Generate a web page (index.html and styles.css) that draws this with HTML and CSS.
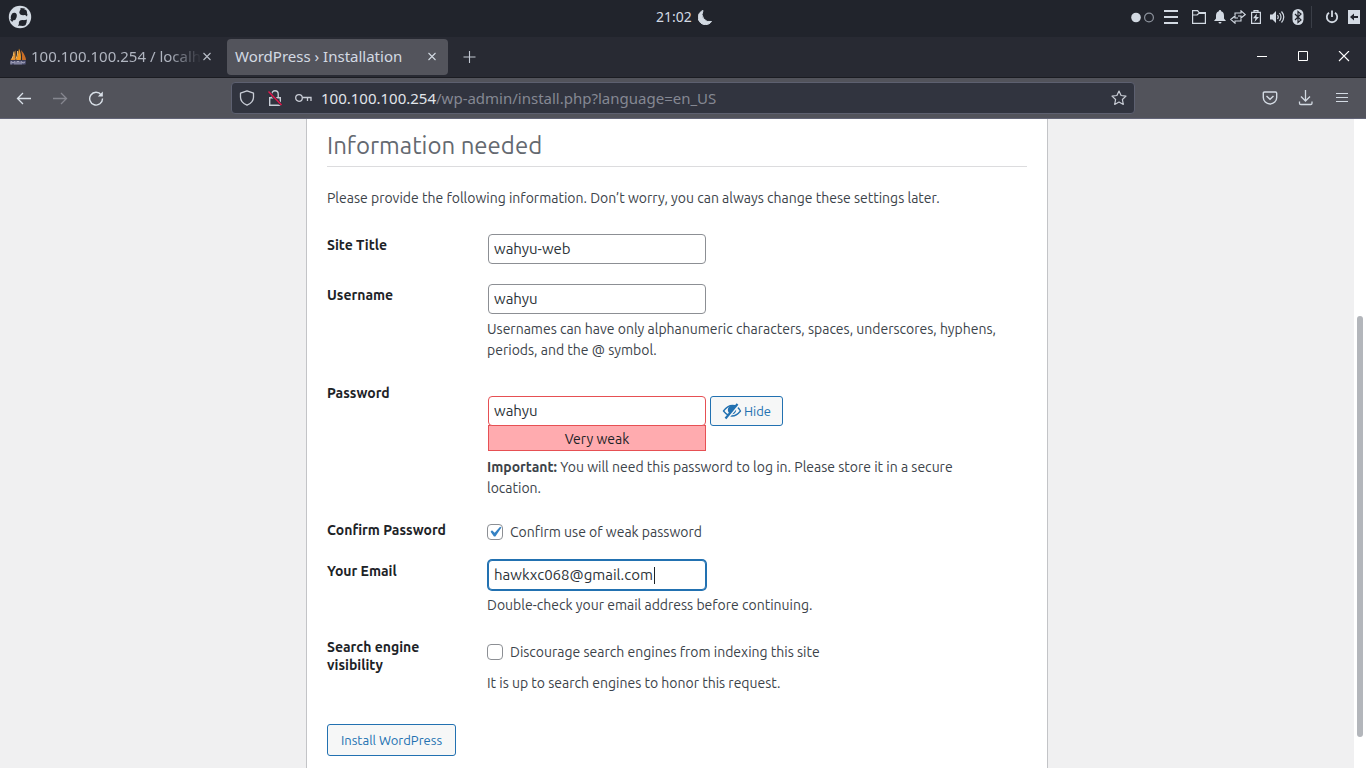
FILE: index.html
```html
<!DOCTYPE html>
<html lang="en">
<head>
<meta charset="utf-8">
<title>WordPress › Installation</title>
<link rel="stylesheet" href="styles.css">
</head>
<body>
<header class="panel">
  <button class="icon-btn launcher" aria-label="Applications"><svg width="24" height="24" viewBox="0 0 24 24"><circle cx="12" cy="12" r="11.200" fill="#d3dae3"/><g fill="#21242c"><ellipse cx="5.800" cy="11.500" rx="2.900" ry="3.800" transform="rotate(15 5.800 11.500)"/><path d="M1.800 14.500l4-.8-1.500 3.300z"/><ellipse cx="15.200" cy="7.200" rx="3.800" ry="3"/><path d="M12.500 3l4.500.5-1.500 2-3 1z"/><path d="M16.500 6l3 3-.5 2.500-2.500-2z"/><ellipse cx="14.500" cy="18" rx="3.700" ry="2.900"/><path d="M15.500 15.500l3.500-1-.6 3.500-1.500 1.500z"/><path d="M11.500 17.500l-1.500 3.500 3-.8z"/></g></svg></button>
  <div class="clock"><time>21:02</time><svg width="14" height="15" viewBox="0 0 14 15"><path d="M5 .5A7.300 7.300 0 1 0 13.500 11.500 7.600 7.600 0 0 1 5 .5z" fill="#d3dae3" stroke="#d3dae3"/></svg></div>
  <div class="tray">
    <svg class="dots" width="24" height="12" viewBox="0 0 24 12"><circle cx="6" cy="6.500" r="4.800" fill="#d3dae3"/><circle cx="19" cy="6.500" r="4.400" fill="none" stroke="#8d939d" stroke-width="1.200"/></svg>
    <svg class="menu" width="14" height="14" viewBox="0 0 14 14"><path d="M0 1h14M0 7h14M0 13h14" stroke="#d3dae3" stroke-width="2"/></svg>
    <svg class="folder" width="16" height="16" viewBox="0 0 16 16" fill="none" stroke="#d3dae3" stroke-width="1.200"><path d="M1.600 14.400V1.600h5l1.500 2h6.300v10.800zM1.600 6h4.500l1.500-1.500h6.800"/></svg>
    <svg class="bell" width="12" height="14" viewBox="0 0 12 14" fill="#d3dae3"><path d="M6 0a1.300 1.300 0 0 1 1.200 1.300C9.500 2 10 4 10 6v2.500l2 2.500H0l2-2.500V6c0-2 .5-4 2.800-4.700A1.300 1.300 0 0 1 6 0zM4.500 12h3a1.500 1.500 0 0 1-3 0z"/></svg>
    <svg class="sync" width="16" height="14" viewBox="0 0 16 14" fill="none" stroke="#d3dae3" stroke-width="1.100"><path d="M5 5V3h6V.8L15.300 4.500 11 8V6H8M11 9v2H5v2.200L.7 9.500 5 6v2h3"/></svg>
    <svg class="battery" width="10" height="14" viewBox="0 0 10 14"><path d="M.6 2.300h8.800v11.100H.6zM3 2V.7h4V2" fill="none" stroke="#d3dae3" stroke-width="1.200"/><path d="M5.800 3.500L2 8.300h2.500L3.500 12 8 7H5.500z" fill="#d3dae3"/></svg>
    <svg class="volume" width="16" height="14" viewBox="0 0 16 14"><path d="M1 4.500h2.500L7 1v12L3.500 9.500H1z" fill="#d3dae3"/><path d="M8.500 5q1.500 2 0 4M10.500 3q3 4 0 8M12.500 1.500q4.500 5.500 0 11" fill="none" stroke="#d3dae3" stroke-width="1.200"/></svg>
    <svg class="bluetooth" width="12" height="16" viewBox="0 0 12 16"><rect x=".5" width="11" height="16" rx="5.500" fill="#d3dae3"/><path d="M3 5l6 6-3 2.500v-11L9 5l-6 6" fill="none" stroke="#21242c" stroke-width="1.200"/></svg>
    <span class="divider"></span>
    <button class="icon-btn" aria-label="Power"><svg width="14" height="14" viewBox="0 0 14 14" fill="none" stroke="#d3dae3" stroke-width="1.800"><path d="M4 2.800a5.200 5.200 0 1 0 6 0M7 .5v6.500"/></svg></button>
    <button class="icon-btn session" aria-label="Session"><svg width="12" height="14" viewBox="0 0 12 14"><path d="M0 0h12v14H0z" fill="#d3dae3"/><path d="M2 7l4-3.500v2.500h4v2H6v2.500z" fill="#21242c"/></svg></button>
  </div>
</header>

<nav class="tabs" aria-label="Tabs">
  <div class="tab">
    <svg class="favicon" width="18" height="18" viewBox="0 0 18 18"><path d="M6.500 2v10H1.500Q5 8 6.500 2z" fill="#e8922c"/><path d="M10 .5q2.500 5 1.800 11.500H7Q9.500 7 10 .5z" fill="#f39a23"/><path d="M12 2q4.500 5 5 10h-4Q13.500 7 12 2z" fill="#c96e27"/><path d="M5 3.500Q4.500 8 3 11M8.500 3q.5 4-1.500 8" stroke="#f0bd6b" fill="none"/><path d="M1 12.500h16l-.5 4H1.500z" fill="#55577a"/><path d="M2 16.500v-3l2 1.500L6 13.500v3m2 0v-3h2v3m2 0v-3l2 1.500 2-1" stroke="#b2b3c6" fill="none" stroke-width=".9"/></svg>
    <span class="tab-title tab-title-fade">100.100.100.254 / localh</span>
    <button class="icon-btn" aria-label="Close tab"><svg width="10" height="10" viewBox="0 0 10 10"><path d="M1.500 1l7 7M8.500 1l-7 7" stroke="#b9bec8" stroke-width="1.100"/></svg></button>
  </div>
  <div class="tab tab-active">
    <span class="tab-title">WordPress › Installation</span>
    <button class="icon-btn" aria-label="Close tab"><svg width="10" height="10" viewBox="0 0 10 10"><path d="M1.500 1l7 7M8.500 1l-7 7" stroke="#d3dae3" stroke-width="1.100"/></svg></button>
  </div>
  <button class="icon-btn new-tab" aria-label="New tab"><svg width="13" height="13" viewBox="0 0 13 13"><path d="M6.500 0v12M.5 6h12" stroke="#c3c9d3" stroke-width="1.100"/></svg></button>
  <div class="window-controls">
    <button class="icon-btn" aria-label="Minimize"><svg width="12" height="12" viewBox="0 0 12 12"><path d="M1 5.500h10" stroke="#fff"/></svg></button>
    <button class="icon-btn" aria-label="Maximize"><svg width="12" height="12" viewBox="0 0 12 12"><path d="M1.500.5h9v9h-9z" fill="none" stroke="#fff"/></svg></button>
    <button class="icon-btn" aria-label="Close window"><svg width="12" height="12" viewBox="0 0 12 12"><path d="M1 0l10 10M11 0L1 10" stroke="#fff" stroke-width="1.100"/></svg></button>
  </div>
</nav>

<div class="toolbar">
  <div class="nav-buttons">
    <button class="icon-btn" aria-label="Back"><svg width="16" height="16" viewBox="0 0 16 16" fill="none" stroke="#d9e0e8" stroke-width="1.300"><path d="M15 8.500H1.500M7 3L1.500 8.500 7 14"/></svg></button>
    <button class="icon-btn" aria-label="Forward" disabled><svg width="16" height="16" viewBox="0 0 16 16" fill="none" stroke="#85868f" stroke-width="1.300"><path d="M1 8.500h13.500M9 3l5.500 5.500L9 14"/></svg></button>
    <button class="icon-btn" aria-label="Reload"><svg width="16" height="16" viewBox="0 0 16 16" fill="none" stroke="#d9e0e8" stroke-width="1.400"><path d="M13.200 4.800A6.400 6.400 0 1 0 14.500 8.600"/><path d="M14.800 1.600v5H9.800z" fill="#d9e0e8" stroke="none"/></svg></button>
  </div>
  <div class="address">
    <svg width="16" height="16" viewBox="0 0 16 16" fill="none" stroke="#c9cdd6" stroke-width="1.300"><path d="M8 .8l6.500 2.400v4q0 5-6.500 8-6.500-3-6.500-8v-4z" stroke-linejoin="round"/></svg>
    <svg width="16" height="16" viewBox="0 0 16 16" fill="none"><path d="M2.700 7.700h10.600v7.500H2.700zM4.800 7.500V4a3.200 3.200 0 0 1 6.400 0v3.500" stroke="#c9cdd6" stroke-width="1.400"/><path d="M1.500 1.500l13 13.500" stroke="#31343f" stroke-width="3"/><path d="M1.500 1.500l13 13.500" stroke="#e5164b" stroke-width="1.400"/></svg>
    <svg width="18" height="16" viewBox="0 0 18 16" fill="none" stroke="#c9cdd6" stroke-width="1.300"><circle cx="4" cy="8" r="3.300"/><path d="M7.300 7.500H16v3.500M12.500 7.500V11"/></svg>
    <p class="url">100.100.100.254<span class="url-path">/wp-admin/install.php?language=en_US</span></p>
    <button class="icon-btn" aria-label="Bookmark"><svg width="16" height="16" viewBox="0 0 16 16" fill="none" stroke="#c9cdd6" stroke-width="1.200"><path d="M8 1l2.100 4.500 4.900.6-3.600 3.400.9 4.900L8 12l-4.300 2.400.9-4.900L1 6.100l4.900-.6z" stroke-linejoin="round"/></svg></button>
  </div>
  <div class="tools">
    <button class="icon-btn" aria-label="Save to Pocket"><svg width="16" height="16" viewBox="0 0 16 16" fill="none" stroke="#d3dae3" stroke-width="1.400"><path d="M2.500 2h11q1.200 0 1.200 1.200v4.300a6.700 6.500 0 0 1-13.400 0V3.200Q1.300 2 2.500 2z"/><path d="M4.500 6L8 9.300 11.500 6"/></svg></button>
    <button class="icon-btn" aria-label="Downloads"><svg width="16" height="16" viewBox="0 0 16 16" fill="none" stroke="#d3dae3" stroke-width="1.300"><path d="M7.500 0v10.500M3 6.500L7.500 11 12 6.500M1.500 11.500v1.700q0 1.300 1.300 1.300h9.900q1.300 0 1.300-1.300v-1.700"/></svg></button>
    <button class="icon-btn" aria-label="Menu"><svg width="16" height="16" viewBox="0 0 16 16"><path d="M2 3.500h12M2 7.500h12M2 11.500h12" stroke="#d3dae3"/></svg></button>
  </div>
</div>

<div class="viewport">
  <main class="page">
    <form class="card" onsubmit="return false">
      <h1 class="heading">Information needed</h1>
      <p class="intro">Please provide the following information. Don’t worry, you can always change these settings later.</p>

      <div class="row">
        <label class="label" for="site-title">Site Title</label>
        <div class="field"><input class="input" id="site-title" type="text" value="wahyu-web"></div>
      </div>
      <div class="row">
        <label class="label" for="username">Username</label>
        <div class="field">
          <input class="input" id="username" type="text" value="wahyu">
          <p class="help">Usernames can have only alphanumeric characters, spaces, underscores, hyphens, periods, and the @ symbol.</p>
        </div>
      </div>
      <div class="row row-password">
        <label class="label" for="password">Password</label>
        <div class="field field-password">
          <div class="password-line">
            <input class="input input-weak" id="password" type="text" value="wahyu">
            <button class="button button-hide" type="button"><svg width="20" height="18" viewBox="0 0 20 18"><path d="M1.500 9Q5.500 3.500 10.500 3.500T18.500 9Q14.500 14 10 14T1.500 9z" fill="none" stroke="#2271b1" stroke-width="1.300"/><circle cx="10" cy="8" r="4.200" fill="#2271b1"/><path d="M5 17L17.500 2" stroke="#f6f7f7" stroke-width="2"/><path d="M3.500 16.500L15.500 2" stroke="#2271b1" stroke-width="2.200"/></svg>Hide</button>
          </div>
          <div class="strength" role="status">Very weak</div>
          <p class="help"><strong>Important:</strong> You will need this password to log in. Please store it in a secure location.</p>
        </div>
      </div>
      <div class="row row-confirm">
        <span class="label">Confirm Password</span>
        <div class="field"><label class="check"><input class="checkbox" type="checkbox" checked><span class="check-text">Confirm use of weak password</span></label></div>
      </div>
      <div class="row">
        <label class="label" for="email">Your Email</label>
        <div class="field">
          <div class="email-box"><input class="input input-focus" id="email" type="email" value="hawkxc068@gmail.com"><span class="caret"></span></div>
          <p class="help">Double-check your email address before continuing.</p>
        </div>
      </div>
      <div class="row">
        <span class="label">Search engine visibility</span>
        <div class="field field-search">
          <label class="check"><input class="checkbox" type="checkbox"><span class="check-text">Discourage search engines from indexing this site</span></label>
          <p class="help help-search">It is up to search engines to honor this request.</p>
        </div>
      </div>
      <button class="button button-install" type="submit">Install WordPress</button>
    </form>
  </main>
  <div class="scroll-track"><div class="scroll-thumb"></div></div>
</div>
</body>
</html>
```
FILE: styles.css
```css
* { box-sizing: border-box; }

body {
  margin: 0;
  height: 100vh;
  display: flex;
  flex-direction: column;
  overflow: hidden;
  font-family: "Ubuntu", "Noto Sans", sans-serif;
  font-size: 14px;
  line-height: 21px;
  color: #3c434a;
  background: #f0f0f1;
}

h1, p { margin: 0; }
svg { display: block; flex: none; }

.icon-btn {
  display: flex;
  flex: none;
  padding: 0;
  border: 0;
  background: none;
}

/* Desktop panel */
.panel {
  flex: none;
  display: grid;
  grid-template-columns: 1fr auto 1fr;
  align-items: center;
  height: 37px;
  padding: 0 6px 3px 8px;
  background: #21242c;
  color: #d3dae3;
  font-family: "Noto Sans", sans-serif;
}
.clock { display: flex; align-items: center; gap: 6px; line-height: 18px; }
.tray { display: flex; align-items: center; justify-content: flex-end; }
.menu { margin: 0 13px 0 10px; }
.folder { margin-right: 7px; }
.bell { margin-right: 4px; }
.sync { margin-right: 5px; }
.battery { margin-right: 8px; }
.volume { margin-right: 7px; }
.divider { width: 1px; height: 22px; margin: 0 13px 0 7px; background: #3a3e47; }
.session { margin-left: 9px; }

/* Tab strip */
.tabs {
  flex: none;
  display: flex;
  align-items: center;
  height: 41px;
  background: #282a33;
  border-bottom: 1px solid #1b1c22;
  font-family: "Noto Sans", sans-serif;
  font-size: 15px;
  color: #b0b5c0;
}
.tab {
  display: flex;
  align-items: center;
  width: 221px;
  height: 36px;
  padding: 0 9px;
}
.tab:first-child { margin-right: 6px; }
.favicon { margin-right: 4px; }
.tab-title { flex: 1; padding-bottom: 2px; white-space: nowrap; }
.tab-title-fade { mask-image: linear-gradient(to right, #000 80%, transparent); }
.tab-active { padding: 0 11px 0 8px; border-radius: 4px; background: #53545c; color: #d3dae3; }
.new-tab { margin-left: 15px; }
.window-controls { display: flex; gap: 29px; margin-left: auto; padding-right: 16px; }

/* Navigation toolbar */
.toolbar {
  flex: none;
  display: flex;
  align-items: center;
  height: 41px;
  padding: 0 16px;
  background: #52535b;
  border-bottom: 1px solid #626477;
  font-family: "Noto Sans", sans-serif;
}
.nav-buttons, .tools { display: flex; gap: 20px; }
.address {
  flex: 1;
  display: flex;
  align-items: center;
  gap: 12px;
  height: 32px;
  margin: 0 127px;
  padding: 0 7px;
  border: 1px solid #5d6070;
  border-radius: 4px;
  background: #31343f;
}
.url { flex: 1; margin-left: -4px; font-size: 15px; color: #e1e5eb; }
.url-path { color: #858893; }

/* Page */
.viewport { flex: 1; min-height: 0; display: flex; }
.page { flex: 1; overflow: hidden; background: #f0f0f1; }
.card {
  max-width: 742px;
  min-height: 100%;
  margin: 0 auto;
  padding: 0 20px 12px;
  border: 1px solid #c3c4c7;
  border-width: 0 1px;
  background: #fff;
}
.heading {
  margin-bottom: 21px;
  padding: 12px 0 5px;
  border-bottom: 1px solid #dcdcde;
  font-size: 24px;
  font-weight: 400;
  line-height: 30px;
  color: #646970;
}
.intro { margin-bottom: 25px; }
.row {
  display: grid;
  grid-template-columns: 140px minmax(0, 1fr);
  gap: 20px;
  margin-bottom: 20px;
}
.row-password { margin-top: 21px; }
.label {
  padding-top: 2px;
  font-weight: 700;
  line-height: 18px;
  color: #1d2327;
}
.field { padding-right: 20px; }
.input {
  display: block;
  width: 218px;
  height: 30px;
  margin: 0 1px;
  padding: 0 5px 2px;
  border: 1px solid #8c8f94;
  border-radius: 4px;
  outline: 0;
  background: #fff;
  color: #2c3338;
  font: 15px "Ubuntu", "Noto Sans", sans-serif;
}
.help { margin-top: 5px; }
.field-password { padding-top: 14px; }
.password-line { display: flex; gap: 3px; }
.input-weak { border-color: #e65054; }
.strength {
  width: 218px;
  height: 26px;
  margin: -1px 1px 6px;
  border: 1px solid #e65054;
  background: #ffabaf;
  line-height: 26px;
  text-align: center;
  color: #1d2327;
}
.button {
  display: flex;
  align-items: center;
  justify-content: center;
  border: 1px solid #2271b1;
  border-radius: 3px;
  background: #f6f7f7;
  color: #2271b1;
  font: 13px "Ubuntu", "Noto Sans", sans-serif;
}
.button-hide { width: 73px; height: 30px; gap: 2px; padding: 0; }
.button-install { width: 129px; height: 32px; margin-top: 30px; padding: 0; }
.row-confirm { margin-bottom: 16px; line-height: 24px; }
.check { display: flex; align-items: center; gap: 7px; }
.check-text { padding-top: 1px; }
.checkbox {
  appearance: none;
  width: 16px;
  height: 16px;
  margin: 0;
  border: 1px solid #8c8f94;
  border-radius: 4px;
  background: #fff;
}
.checkbox:checked {
  background: #fff url("data:image/svg+xml,%3Csvg xmlns='http://www.w3.org/2000/svg' viewBox='0 0 20 20'%3E%3Cpath d='M14.830 4.890l1.340.940-5.810 8.380H9.020L5.780 9.670l1.340-1.250 2.570 2.400z' fill='%233582c4'/%3E%3C/svg%3E") center / 21px 21px no-repeat;
}
.email-box { position: relative; }
.input-focus { border-color: #2271b1; box-shadow: 0 0 0 1px #2271b1; }
.caret { position: absolute; top: 7px; left: 167px; width: 1px; height: 17px; background: #1d2327; }
.field-search { padding-top: 5px; }
.help-search { margin-top: 10px; }

.scroll-track { flex: none; width: 12px; padding: 197px 3px 0; background: #fff; }
.scroll-thumb { width: 6px; height: 421px; border-radius: 3px; background: #b3b6bb; }
```
